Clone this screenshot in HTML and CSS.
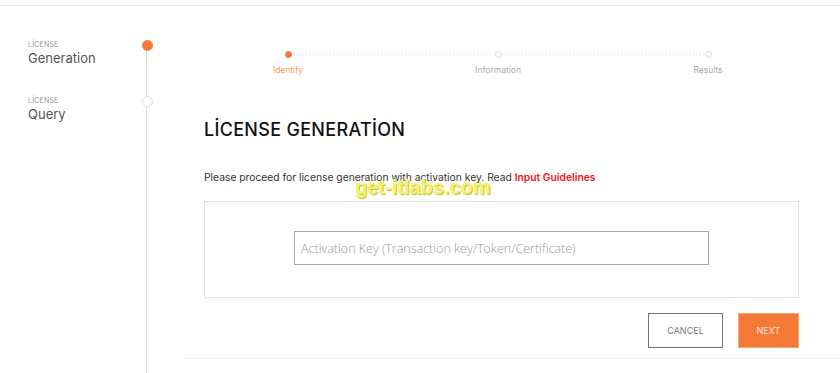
FILE: index.html
```html
<!DOCTYPE html>
<html lang="en">
<head>
<meta charset="utf-8">
<title>License Generation</title>
<link rel="stylesheet" href="styles.css">
</head>
<body>
<div class="topbar"></div>
<div class="layout">
  <aside class="side-nav">
    <div class="nav-item">
      <div class="nav-text">
        <div class="nav-label">LİCENSE</div>
        <div class="nav-title">Generation</div>
      </div>
      <span class="nav-dot active"></span>
    </div>
    <div class="nav-item">
      <div class="nav-text">
        <div class="nav-label">LİCENSE</div>
        <div class="nav-title">Query</div>
      </div>
      <span class="nav-dot"></span>
    </div>
  </aside>
  <main class="main">
    <ol class="stepper">
      <li class="step active"><span class="step-dot"></span><span class="step-label">Identify</span></li>
      <li class="step"><span class="step-dot"></span><span class="step-label">Information</span></li>
      <li class="step last"><span class="step-dot"></span><span class="step-label">Results</span></li>
    </ol>
    <div class="content">
      <h1 class="title">LİCENSE GENERATİON</h1>
      <p class="intro">Please proceed for license generation with activation key. Read <a class="guide-link" href="#">Input Guidelines</a></p>
      <div class="key-box">
        <input class="key-input" type="text" placeholder="Activation Key (Transaction key/Token/Certificate)">
      </div>
      <div class="actions">
        <button class="btn btn-cancel" type="button">CANCEL</button>
        <button class="btn btn-next" type="button">NEXT</button>
      </div>
    </div>
    <div class="footer-line"></div>
  </main>
</div>
<div class="watermark">get-itlabs.com</div>
</body>
</html>
```

FILE: styles.css
```css
* { box-sizing: border-box; }
html, body { margin: 0; padding: 0; background: #fff; }
body {
  font-family: "Inter", "Liberation Sans", sans-serif;
  color: #222;
  width: 840px;
  height: 373px;
  overflow: hidden;
  position: relative;
}
.topbar {
  height: 6px;
  border-bottom: 1px solid #e4e4e4;
}
.layout {
  display: grid;
  grid-template-columns: 185px 1fr;
  height: 367px;
}
.side-nav {
  position: relative;
  padding: 34px 0 0 28px;
  display: flex;
  flex-direction: column;
  gap: 30px;
}
.side-nav::before {
  content: "";
  position: absolute;
  left: 146px;
  top: 45px;
  bottom: 0;
  width: 1px;
  background: #dcdcdc;
}
.nav-item {
  display: flex;
  align-items: flex-start;
  width: 125px;
  justify-content: space-between;
}
.nav-label {
  font-size: 7px;
  letter-spacing: 0.2px;
  color: #999;
  line-height: 10px;
}
.nav-title {
  font-size: 13px;
  color: #555;
  line-height: 16px;
  font-weight: 400;
}
.nav-dot {
  position: relative;
  z-index: 1;
  width: 11px;
  height: 11px;
  border-radius: 50%;
  background: #fff;
  border: 1px solid #ddd;
}
.nav-dot.active {
  background: #f57a38;
  border-color: #f57a38;
}
.main {
  display: flex;
  flex-direction: column;
}
.stepper {
  list-style: none;
  margin: 45px 0 0 -2px;
  padding: 0;
  display: grid;
  grid-template-columns: repeat(3, 210px);
}
.step {
  display: flex;
  flex-direction: column;
  align-items: center;
  position: relative;
}
.step::after {
  content: "";
  position: absolute;
  top: 3px;
  left: calc(50% + 6px);
  width: 198px;
  height: 1px;
  background-image: linear-gradient(to right, #d0d0d0 1px, transparent 1px);
  background-size: 3px 1px;
}
.step.last::after { display: none; }
.step-dot {
  width: 7px;
  height: 7px;
  border-radius: 50%;
  border: 1px solid #d4d4d4;
  background: #fff;
}
.step.active .step-dot {
  background: #f57a38;
  border-color: #f57a38;
}
.step-label {
  margin-top: 6px;
  font-size: 8.5px;
  color: #aaa;
  line-height: 12px;
}
.step.active .step-label { color: #f79a68; }
.content {
  padding: 0 0 0 19px;
  width: 614px;
}
.title {
  margin: 42px 0 0;
  font-size: 18px;
  font-weight: 500;
  color: #111;
  line-height: 24px;
  letter-spacing: 0.3px;
}
.intro {
  margin: 28px 0 0;
  font-size: 10.3px;
  color: #333;
  line-height: 14px;
}
.guide-link {
  color: #f5141e;
  font-weight: 600;
  text-decoration: none;
}
.key-box {
  margin-top: 17px;
  height: 97px;
  padding-bottom: 3px;
  border: 1px solid #e2e2e2;
  display: flex;
  align-items: center;
  justify-content: center;
}
.key-input {
  width: 415px;
  height: 34px;
  border: 1px solid #a8a8a8;
  padding: 0 6px;
  font-family: "Open Sans", "Liberation Sans", sans-serif;
  font-weight: 300;
  font-size: 12.5px;
  color: #333;
  outline: none;
}
.key-input::placeholder { color: #999; }
.actions {
  display: flex;
  justify-content: flex-end;
  gap: 15px;
  margin-top: 15px;
}
.btn {
  height: 35px;
  font-family: "Inter", "Liberation Sans", sans-serif;
  font-size: 9px;
  border-radius: 0;
  cursor: pointer;
}
.btn-cancel {
  width: 75px;
  background: #fff;
  border: 1px solid #777;
  color: #777;
}
.btn-next {
  width: 61px;
  background: #f57a38;
  border: 1px solid #f8a479;
  color: #fde6da;
}
.footer-line {
  margin-top: 10px;
  width: 653px;
  height: 1px;
  background: #f3f3f3;
}
.watermark {
  position: absolute;
  left: 355px;
  top: 176px;
  font-family: "Liberation Sans", sans-serif;
  font-weight: 700;
  font-size: 20px;
  color: #f3f36a;
  text-shadow: 1px 1px 1px #b9b93a;
  pointer-events: none;
}
```
